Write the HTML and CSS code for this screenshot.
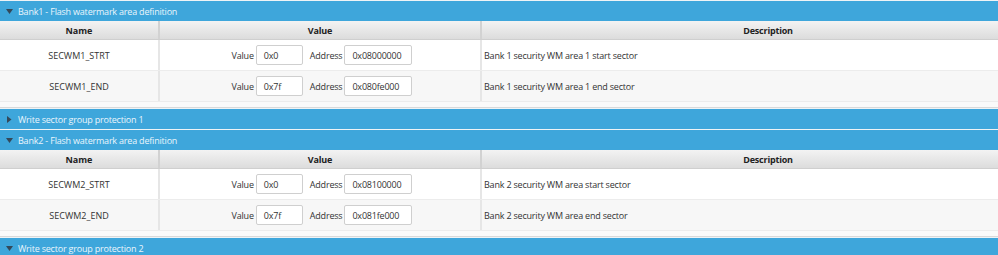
FILE: index.html
```html
<!DOCTYPE html>
<html>
<head>
<meta charset="utf-8">
<link rel="stylesheet" href="styles.css">
</head>
<body>
<div class="page">
  <section class="panel">
    <div class="bar"><svg class="tri" width="7" height="5" viewBox="0 0 7 5"><path d="M0 0H7L3.5 5Z"/></svg><span>Bank1 - Flash watermark area definition</span></div>
    <div class="content">
      <div class="table">
        <div class="row head"><div class="cell c-name">Name</div><div class="cell c-val">Value</div><div class="cell c-desc">Description</div></div>
        <div class="row"><div class="cell c-name">SECWM1_STRT</div><div class="cell c-val fields"><label>Value</label><span class="inp w1">0x0</span><label class="addr">Address</label><span class="inp w2">0x08000000</span></div><div class="cell c-desc left">Bank 1 security WM area 1 start sector</div></div>
        <div class="row alt"><div class="cell c-name">SECWM1_END</div><div class="cell c-val fields"><label>Value</label><span class="inp w1">0x7f</span><label class="addr">Address</label><span class="inp w2">0x080fe000</span></div><div class="cell c-desc left">Bank 1 security WM area 1 end sector</div></div>
      </div>
    </div>
  </section>
  <section class="panel">
    <div class="bar"><svg class="tri" width="7" height="7" viewBox="0 0 7 7"><path d="M1 0V7L5.5 3.5Z"/></svg><span>Write sector group protection 1</span></div>
  </section>
  <section class="panel">
    <div class="bar"><svg class="tri" width="7" height="5" viewBox="0 0 7 5"><path d="M0 0H7L3.5 5Z"/></svg><span>Bank2 - Flash watermark area definition</span></div>
    <div class="content">
      <div class="table">
        <div class="row head"><div class="cell c-name">Name</div><div class="cell c-val">Value</div><div class="cell c-desc">Description</div></div>
        <div class="row"><div class="cell c-name">SECWM2_STRT</div><div class="cell c-val fields"><label>Value</label><span class="inp w1">0x0</span><label class="addr">Address</label><span class="inp w2">0x08100000</span></div><div class="cell c-desc left">Bank 2 security WM area start sector</div></div>
        <div class="row alt"><div class="cell c-name">SECWM2_END</div><div class="cell c-val fields"><label>Value</label><span class="inp w1">0x7f</span><label class="addr">Address</label><span class="inp w2">0x081fe000</span></div><div class="cell c-desc left">Bank 2 security WM area end sector</div></div>
      </div>
    </div>
  </section>
  <section class="panel">
    <div class="bar"><svg class="tri" width="7" height="5" viewBox="0 0 7 5"><path d="M0 0H7L3.5 5Z"/></svg><span>Write sector group protection 2</span></div>
  </section>
</div>
</body>
</html>
```
FILE: styles.css
```css
html, body {
  margin: 0;
  padding: 0;
  background: #eef3f6;
}
.page {
  width: 998px;
  height: 255px;
  overflow: hidden;
  font-family: "Open Sans", "Noto Sans", sans-serif;
  font-size: 9px;
  letter-spacing: -0.2px;
  color: #333;
}
.panel {
  margin-top: 1px;
}
.bar {
  height: 20px;
  background: #3ea6db;
  color: #eaf5fb;
  display: flex;
  align-items: center;
  padding-left: 6px;
}
.tri {
  fill: #34495a;
  margin-right: 5px;
}
.content {
  background: #fafafa;
  padding-bottom: 5px;
  border-bottom: 1px solid #d9d9d9;
  overflow: hidden;
}
.table {
  width: 1056px;
}
.row {
  display: grid;
  grid-template-columns: 160px 322px 574px;
  height: 31px;
  background: #ffffff;
  border-bottom: 1px solid #ececec;
  box-sizing: border-box;
}
.row.alt {
  background: #f7f7f7;
}
.row.head {
  height: 19px;
  background: linear-gradient(#f3f3f3, #dcdcdc);
  border-bottom: 1px solid #cfcfcf;
  font-weight: bold;
  color: #222;
}
.cell {
  display: flex;
  align-items: center;
  justify-content: center;
  border-right: 2px solid #e6e6e6;
  box-sizing: border-box;
}
.c-name {
  letter-spacing: 0;
}
.row.head .cell {
  border-right: 2px solid #d2d2d2;
}
.cell.left {
  justify-content: flex-start;
  padding-left: 2px;
}
.fields {
  padding-left: 4px;
}
.c-val label {
  margin-right: 2px;
}
.c-val .addr {
  margin-left: 7px;
}
.inp {
  display: flex;
  align-items: center;
  height: 20px;
  box-sizing: border-box;
  border: 1px solid #cfcfcf;
  border-radius: 2px;
  background: #fff;
  padding-left: 7px;
}
.inp.w1 { width: 47px; }
.inp.w2 { width: 68px; }
```
